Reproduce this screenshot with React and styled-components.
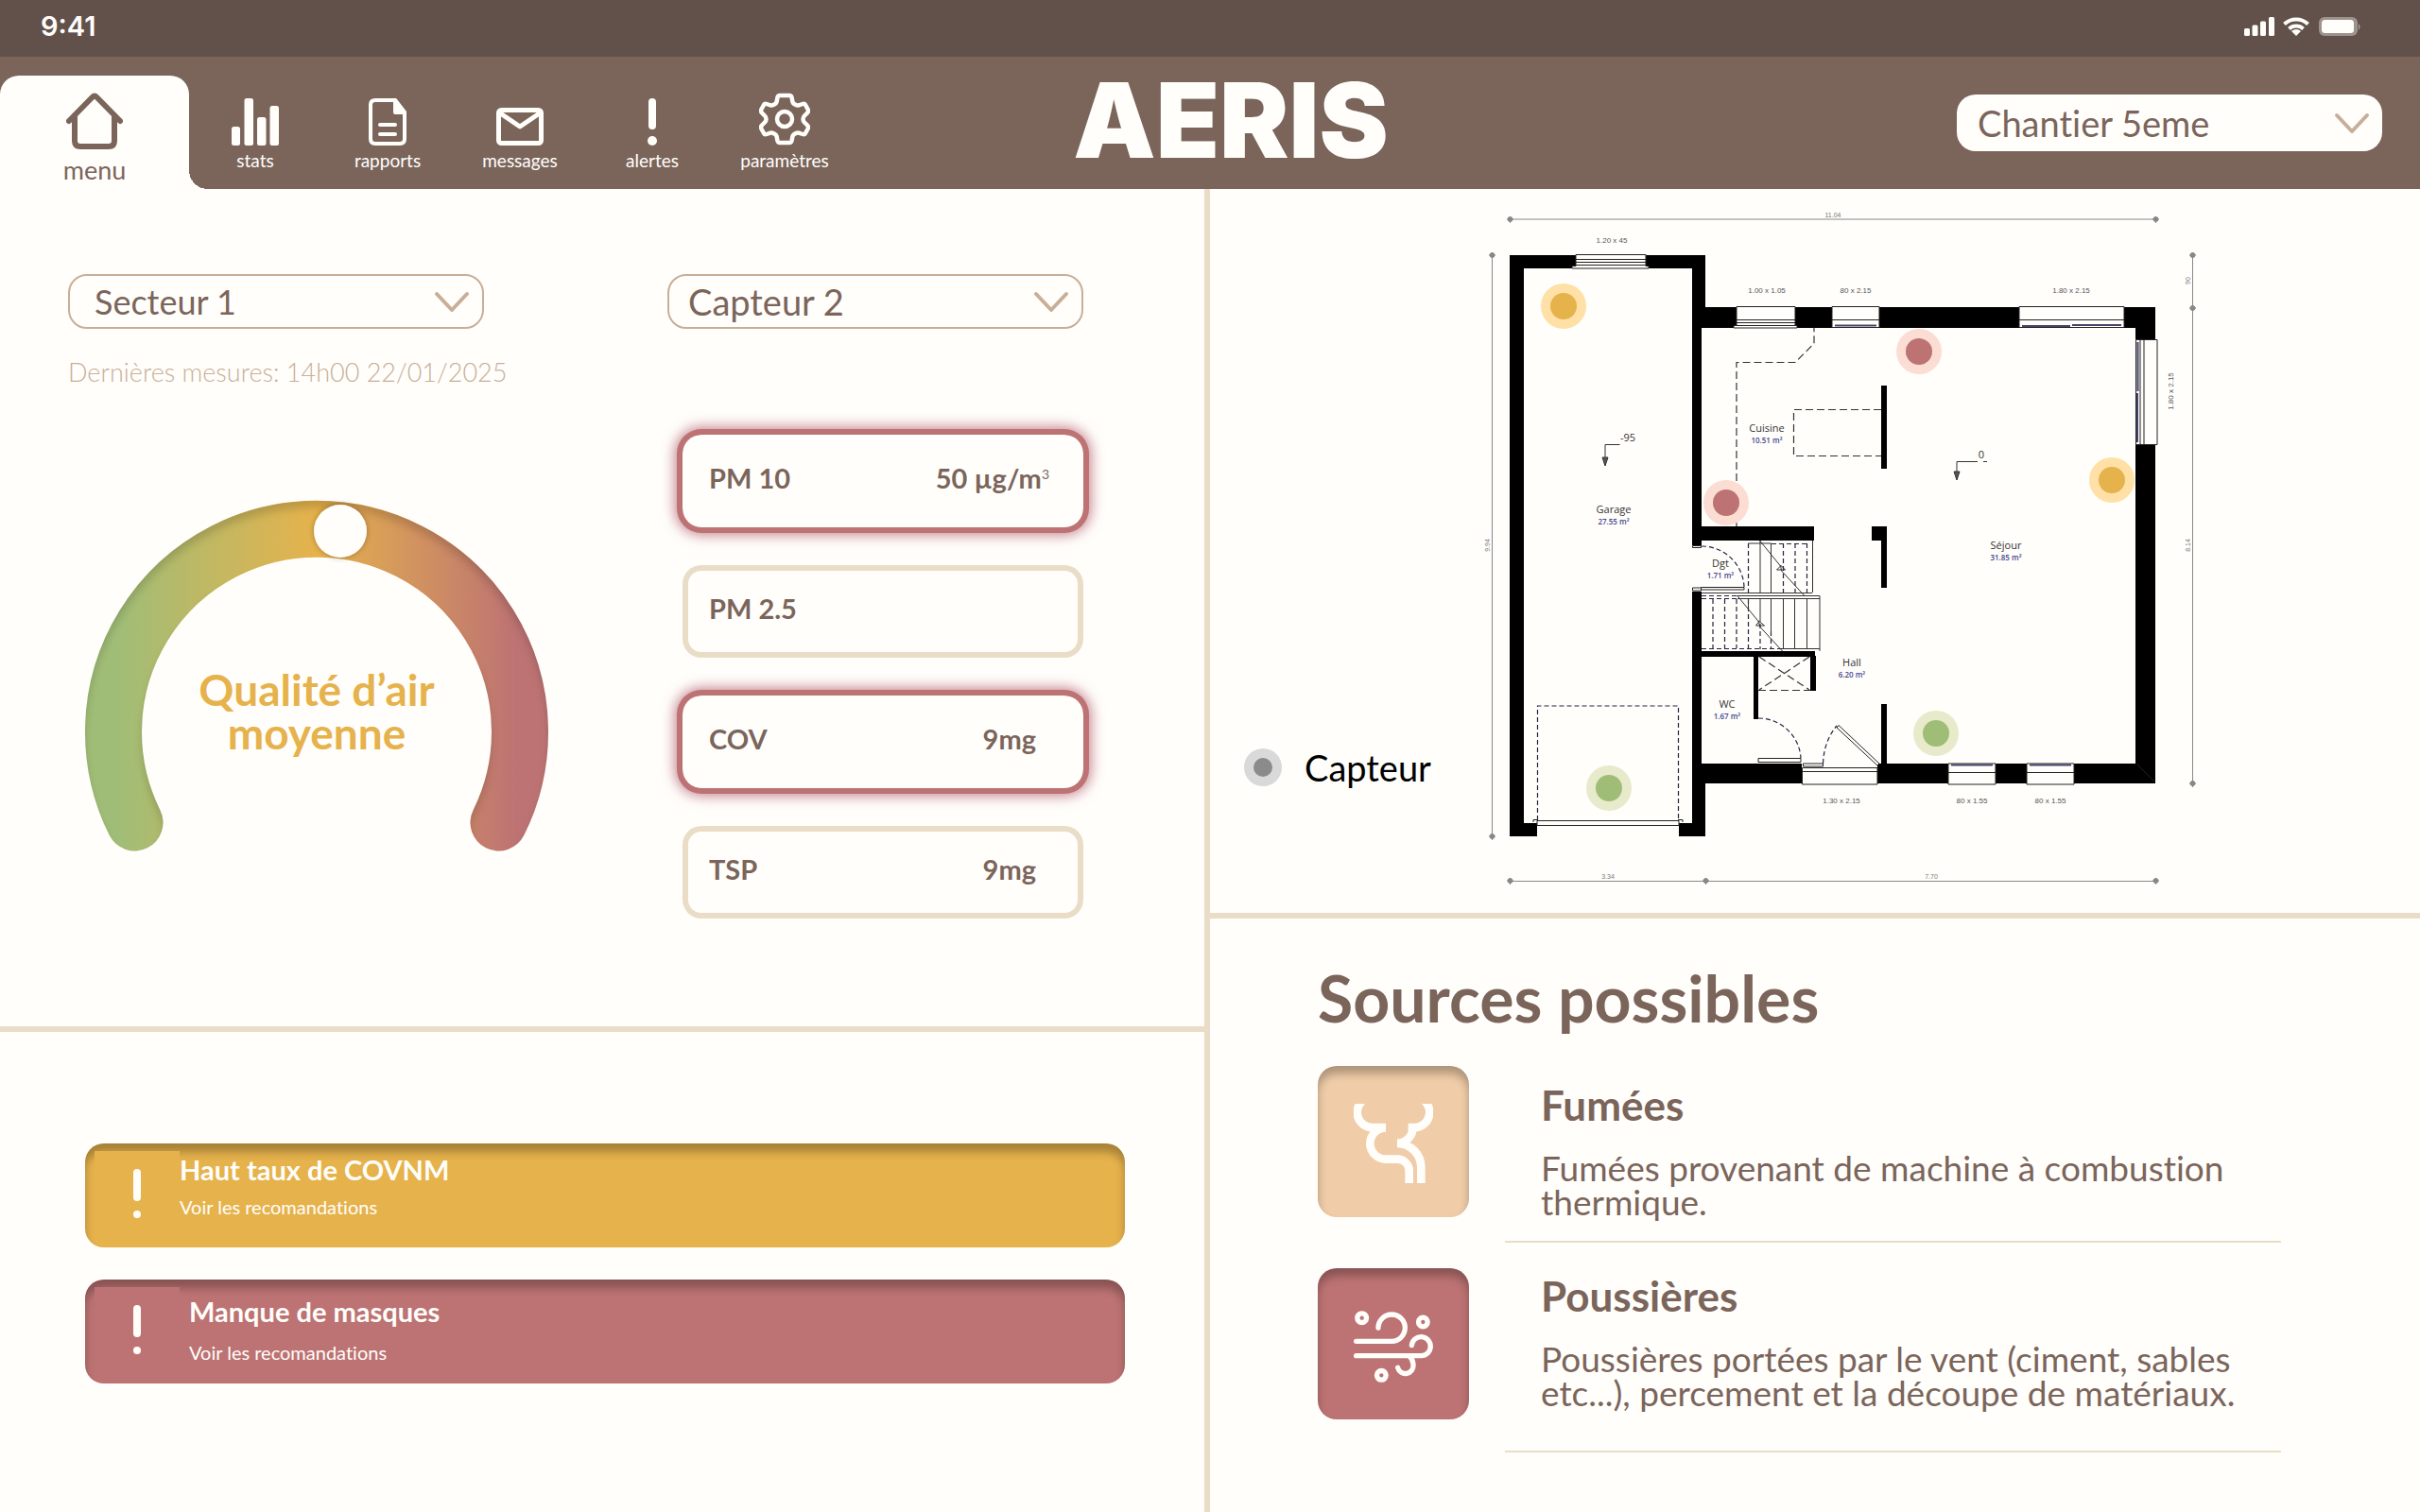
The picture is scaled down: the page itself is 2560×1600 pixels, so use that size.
import React from "react";
import styled, { createGlobalStyle } from "styled-components";

const c = {
  page: "#fffefb",
  dark: "#62514a",
  brown: "#7b655b",
  tan: "#c9ae97",
  sand: "#e9ddc7",
  yellow: "#e6b24c",
  red: "#bd7373",
  green: "#a0bd77",
  peach: "#f0cca8",
};

const GlobalStyle = createGlobalStyle`
  *, *::before, *::after { box-sizing: border-box; }
  body {
    margin: 0;
    background: ${c.page};
    color: ${c.brown};
    font-family: Lato, "Open Sans", sans-serif;
    font-variant-ligatures: none;
  }
  h1, h2, h3, p, ul { margin: 0; padding: 0; }
  ul { list-style: none; }
  button, select { font: inherit; color: inherit; border: 0; background: none; margin: 0; padding: 0; }
  svg { display: block; }
`;

const Page = styled.div`
  min-height: 100vh;
  display: flex;
  flex-direction: column;
`;

/* ---------- status bar ---------- */
const StatusBar = styled.div`
  height: 60px;
  padding: 0 62px 4px 43px;
  display: flex;
  align-items: center;
  justify-content: space-between;
  background: ${c.dark};
  color: ${c.page};
`;
const Clock = styled.time`
  font: 600 29px/32px Inter, sans-serif;
`;
const StatusIcons = styled.div`
  display: flex;
  align-items: center;
  gap: 8px;
`;

/* ---------- header ---------- */
const Header = styled.header`
  height: 140px;
  padding-right: 40px;
  display: grid;
  grid-template-columns: 1fr auto 1fr;
  align-items: center;
  background: ${c.brown};
`;
const Nav = styled.nav`
  align-self: stretch;
  display: flex;
  align-items: flex-end;
`;
const NavItem = styled.button`
  width: 140px;
  height: 120px;
  padding-bottom: 18px;
  display: flex;
  flex-direction: column;
  align-items: center;
  justify-content: flex-end;
  gap: 4px;
  color: ${c.page};
  font-size: 19px;
  line-height: 24px;
  cursor: pointer;
`;
const NavTab = styled(NavItem)`
  position: relative;
  width: 200px;
  padding-bottom: 4px;
  gap: 6px;
  border-radius: 20px 20px 0 0;
  background: ${c.page};
  color: ${c.brown};
  font-size: 27px;
  line-height: 32px;
  &::after {
    content: "";
    position: absolute;
    left: 100%;
    bottom: 0;
    width: 20px;
    height: 20px;
    background: radial-gradient(circle at 100% 0, transparent 20px, ${c.page} 20px);
  }
`;
const Logo = styled.h1`
  padding: 0 0 6px 84px;
  color: ${c.page};
  font-family: Inter, Lato, sans-serif;
  font-size: 110px;
  font-weight: 900;
  line-height: 120px;
`;

/* ---------- drop-downs ---------- */
const PickerBox = styled.label`
  display: grid;
  align-items: center;
  width: ${(p) => p.$width}px;
  height: ${(p) => p.$height}px;
  justify-self: end;
  border-radius: 20px;
  border: ${(p) => (p.$filled ? "0" : `2px solid ${c.tan}`)};
  background: ${c.page};
  color: ${c.brown};
  & > * { grid-area: 1 / 1; }
  & > svg { justify-self: end; margin: 2px 13px 0 0; pointer-events: none; }
`;
const Picker = styled.select`
  appearance: none;
  width: 100%;
  height: 100%;
  padding: 0 60px 0 ${(p) => p.$indent}px;
  font-size: ${(p) => p.$size}px;
  line-height: 44px;
`;

function Dropdown({ label, value, width, height, indent, filled, size = 38 }) {
  return (
    <PickerBox $width={width} $height={height} $filled={filled}>
      <Picker aria-label={label} defaultValue={value} $indent={indent} $size={size}>
        <option>{value}</option>
      </Picker>
      <svg width="38" height="24" viewBox="0 0 38 24" fill="none" stroke={c.tan} strokeWidth="4" strokeLinecap="round" strokeLinejoin="round">
        <path d="M3 3 19 20 35 3" />
      </svg>
    </PickerBox>
  );
}

/* ---------- layout ---------- */
const Main = styled.main`
  flex: 1;
  display: grid;
  grid-template-columns: 1fr 1fr;
`;
const Column = styled.div`
  display: flex;
  flex-direction: column;
  min-width: 0;
  border-right: ${(p) => (p.$divided ? `6px solid ${c.sand}` : "0")};
`;
const Measures = styled.section`
  display: flex;
  justify-content: space-between;
  padding: 90px 128px 114px 72px;
  border-bottom: 6px solid ${c.sand};
`;
const Sector = styled.div`
  display: flex;
  flex-direction: column;
`;
const Updated = styled.p`
  margin-top: 28px;
  color: ${c.tan};
  font-size: 27px;
  font-weight: 300;
  line-height: 36px;
`;
const Gauge = styled.div`
  display: grid;
  width: 490px;
  margin: 118px 0 0 18px;
  & > * { grid-area: 1 / 1; }
  & > svg { overflow: visible; }
`;
const Quality = styled.p`
  padding-top: 177px;
  text-align: center;
  color: ${c.yellow};
  font-size: 46px;
  font-weight: 700;
  line-height: 46px;
`;
const Sensor = styled.div`
  display: flex;
  flex-direction: column;
  align-items: flex-end;
  gap: 112px;
`;
const Readings = styled.ul`
  width: 424px;
  display: flex;
  flex-direction: column;
  gap: 40px;
`;
const Reading = styled.li`
  height: 98px;
  padding: 0 ${(p) => p.$inset}px 6px 28px;
  display: flex;
  align-items: center;
  justify-content: space-between;
  border-radius: 20px;
  box-shadow: ${(p) =>
    p.$alert
      ? `0 0 0 6px ${c.red}, 0 0 14px 8px rgba(176, 88, 104, 0.75)`
      : `inset 0 0 0 6px ${c.sand}`};
  font-size: 29px;
  line-height: 36px;
  font-weight: 700;
  sup { font-size: 14px; line-height: 0; font-weight: 400; vertical-align: 10px; }
`;

/* ---------- alerts ---------- */
const Alerts = styled.section`
  display: flex;
  flex-direction: column;
  gap: 34px;
  padding: 118px 84px 0 90px;
`;
const Alert = styled.article`
  height: 110px;
  display: flex;
  border-radius: 20px;
  background: ${(p) => p.$color};
  box-shadow: inset 0 9px 10px rgba(0, 0, 0, 0.28);
  color: ${c.page};
`;
const AlertIcon = styled.div`
  width: 90px;
  margin: 8px 0 8px 10px;
  padding: 19px 0 0 41px;
  background: ${(p) => p.$color};
`;
const AlertText = styled.div`
  display: flex;
  flex-direction: column;
  gap: ${(p) => (p.$wide ? 15 : 11)}px;
  padding: ${(p) => (p.$wide ? "18px 0 0 10px" : "12px 0 0")};
`;
const AlertTitle = styled.h3`
  font-size: 29px;
  line-height: 32px;
`;
const AlertLink = styled.a`
  color: inherit;
  text-decoration: none;
  font-size: 20px;
  line-height: 24px;
`;

/* ---------- floor plan ---------- */
const PlanSection = styled.section`
  display: flex;
  padding: 6px 0 0 36px;
  border-bottom: 6px solid ${c.sand};
`;
const Legend = styled.div`
  flex: none;
  width: 244px;
  align-self: flex-end;
  display: flex;
  align-items: center;
  gap: 24px;
  margin-bottom: 132px;
  color: #000;
  font-size: 38px;
  line-height: 44px;
`;
const PlanDrawing = styled.svg`
  flex: 0 1 780px;
  min-width: 0;
  .room { font: 11px "Open Sans", sans-serif; fill: #333; text-anchor: middle; }
  .area { font: 600 8px "Open Sans", sans-serif; fill: #45458c; text-anchor: middle; }
  .size { font: 8px "Liberation Sans", sans-serif; fill: #555; text-anchor: middle; }
  .dim { font: 7px "Liberation Sans", sans-serif; fill: #777; text-anchor: middle; }
`;

/* ---------- sources ---------- */
const Sources = styled.section`
  padding: 46px 147px 0 114px;
`;
const SourcesTitle = styled.h2`
  font-size: 68px;
  line-height: 76px;
  font-weight: 700;
`;
const SourceList = styled.ul`
  margin-top: 34px;
  display: flex;
  flex-direction: column;
  gap: 27px;
`;
const Source = styled.li`
  display: flex;
  align-items: flex-start;
  gap: 38px;
`;
const Tile = styled.div`
  flex: none;
  width: 160px;
  height: 160px;
  padding: 40px 38px;
  border-radius: 20px;
  background: ${(p) => p.$color};
  box-shadow: inset 0 8px 10px rgba(0, 0, 0, 0.28);
`;
const SourceText = styled.div`
  flex: 1;
  padding: ${(p) => (p.$low ? "15px 0 23px 38px" : "3px 0 43px 38px")};
  border-bottom: 2px solid ${c.sand};
`;
const SourceName = styled.h3`
  font-size: 44px;
  line-height: 52px;
  font-weight: 700;
`;
const SourceInfo = styled.p`
  margin-top: 23px;
  font-size: 37px;
  line-height: 36px;
`;

/* ---------- icons ---------- */
const HomeIcon = () => (
  <svg width="60" height="60" viewBox="0 0 60 60" fill="none" stroke="currentColor" strokeWidth="6" strokeLinecap="round" strokeLinejoin="round">
    <path d="M3 30 27.500 5q2.500-2.500 5 0L57 30M9 26v25q0 6 6 6h30q6 0 6-6V26" />
  </svg>
);
const StatsIcon = () => (
  <svg width="50" height="50" viewBox="0 0 50 50" fill="currentColor">
    <rect y="30" width="9" height="20" rx="2.500" />
    <rect x="13.500" width="9.500" height="50" rx="2.500" />
    <rect x="27" y="20" width="9.500" height="30" rx="2.500" />
    <rect x="40.500" y="8" width="9.500" height="42" rx="2.500" />
  </svg>
);
const ReportIcon = () => (
  <svg width="40" height="50" viewBox="0 0 40 50" fill="none" stroke="currentColor" strokeWidth="4" strokeLinecap="round" strokeLinejoin="round">
    <path d="M7 2h21l10 13v28q0 5-5 5H7q-5 0-5-5V7q0-5 5-5z" />
    <path d="M28 2v13h10z" fill="currentColor" />
    <path d="M12 28h16M12 38h16" />
  </svg>
);
const MailIcon = () => (
  <svg width="50" height="40" viewBox="0 0 50 40" fill="none" stroke="currentColor" strokeWidth="5" strokeLinejoin="round">
    <rect x="2.500" y="2.500" width="45" height="35" rx="3" />
    <path d="M3 5 25 20 47 5" />
  </svg>
);
const AlertNavIcon = () => (
  <svg width="12" height="50" viewBox="0 0 12 50" fill="currentColor">
    <rect x="2" width="8" height="33" rx="4" />
    <circle cx="6" cy="45" r="5" />
  </svg>
);
const GearIcon = () => (
  <svg width="54" height="56" viewBox="0 0 54 56" fill="none" stroke="currentColor" strokeWidth="4.500" strokeLinejoin="round">
    <path d="M22 3h10q2 0 2.500 2l1 5q.5 1.500 2 2.300l1.500.8q1.500.8 3 .3l4-1.400q2-.7 3 1l2.500 4.500q1.200 2.300-.5 4l-3 3q-1.500 1.500-1.500 3.500t1.500 3.500l3 3q1.700 1.700.5 4L49 43q-1 1.700-3 1l-4-1.400q-1.500-.5-3 .3l-1.500.8q-1.500.8-2 2.300l-1 5q-.5 2-2.500 2H22q-2 0-2.500-2l-1-5q-.5-1.500-2-2.300l-1.500-.8q-1.500-.8-3-.3L8 44q-2 .7-3-1l-2.500-4.500q-1.200-2.300.5-4l3-3Q7.500 30 7.500 28T6 24.500l-3-3q-1.700-1.700-.5-4L5 13q1-1.700 3-1l4 1.400q1.500.5 3-.3l1.500-.8q1.500-.8 2-2.300l1-5q.5-2 2.500-2z" />
    <circle cx="27" cy="28" r="8" />
  </svg>
);
const BangIcon = () => (
  <svg width="8" height="52" viewBox="0 0 8 52" fill="currentColor">
    <rect width="8" height="34" rx="4" />
    <circle cx="4" cy="48" r="4" />
  </svg>
);
const SmokeIcon = () => (
  <svg width="84" height="84" viewBox="0 0 252 252" fill="none" stroke={c.page} strokeWidth="26">
    <path d="M36-15A48 48 0 0 0 61 75H102" />
    <path d="M102 76a50 50 0 0 0 0 100h37a37 37 0 0 1 37 37v39" />
    <path d="M216-15A48 48 0 0 1 191 75h-18" />
    <path d="M188 75a50 50 0 0 1-50 50" />
    <path d="M138 126a76 76 0 0 1 76 76v50" />
  </svg>
);
const WindIcon = () => (
  <svg width="84" height="84" viewBox="0 0 252 252" fill="none" stroke={c.page} strokeWidth="16" strokeLinecap="round">
    <circle cx="26" cy="38" r="14.500" />
    <circle cx="220" cy="51" r="14.500" />
    <circle cx="88" cy="220" r="14.500" />
    <path d="M8 112h113a42.500 42.500 0 1 0-43-43" />
    <path d="M8 158h206a30 30 0 1 0-30-33" />
    <path d="M178 160q11 11 11 27a25 25 0 0 1-49 9" />
  </svg>
);

const GaugeDrawing = () => (
  <svg width="490" height="371" viewBox="90 530 490 371" role="img" aria-label="Qualité d’air moyenne">
    <defs>
      <linearGradient id="scale" gradientUnits="userSpaceOnUse" x1="90" y1="0" x2="580" y2="0">
        <stop offset="0.070" stopColor={c.green} />
        <stop offset="0.500" stopColor={c.yellow} />
        <stop offset="0.930" stopColor={c.red} />
      </linearGradient>
      <filter id="inner" filterUnits="userSpaceOnUse" x="70" y="510" width="530" height="410">
        <feComponentTransfer in="SourceAlpha" result="inverse">
          <feFuncA type="table" tableValues="1 0" />
        </feComponentTransfer>
        <feOffset in="inverse" dy="8" result="moved" />
        <feGaussianBlur in="moved" stdDeviation="4" result="soft" />
        <feComponentTransfer in="soft" result="faded">
          <feFuncA type="linear" slope="0.300" />
        </feComponentTransfer>
        <feComposite in="faded" in2="SourceAlpha" operator="in" result="shade" />
        <feMerge>
          <feMergeNode in="SourceGraphic" />
          <feMergeNode in="shade" />
        </feMerge>
      </filter>
      <filter id="drop" x="-50%" y="-50%" width="200%" height="200%">
        <feDropShadow dx="0" dy="0" stdDeviation="3" floodColor="#000" floodOpacity="0.300" />
      </filter>
    </defs>
    <g filter="url(#inner)">
      <path d="M142.500 870.500A215 215 0 1 1 527.500 870.500" fill="none" stroke="url(#scale)" strokeWidth="60" strokeLinecap="round" />
    </g>
    <circle cx="360" cy="562" r="28" fill={c.page} filter="url(#drop)" />
  </svg>
);

/* ---------- plan data ---------- */
const walls = [
  [1597, 270, 15, 615], [1597, 270, 70, 14], [1741, 270, 63, 14], [1790, 270, 14, 56],
  [1790, 325, 10, 252], [1790, 626, 10, 200], [1790, 808, 14, 77], [1597, 871, 29, 14],
  [1776, 871, 28, 14], [1799, 325, 38, 22], [1899, 325, 39, 22], [1988, 325, 148, 22],
  [2247, 325, 33, 22], [2259, 325, 21, 34], [2259, 470, 21, 359], [1799, 808, 107, 21],
  [1986, 808, 75, 21], [2111, 808, 33, 21], [2194, 808, 86, 21], [1799, 557, 120, 15],
  [1990, 408, 6, 88], [1980, 557, 16, 15], [1990, 557, 6, 65], [1990, 745, 6, 65],
  [1799, 689, 121, 6], [1855, 689, 5, 72], [1915, 694, 6, 37],
];
const rooms = [
  ["Cuisine", "10.51 m²", 1869, 457], ["Garage", "27.55 m²", 1707, 543], ["Séjour", "31.85 m²", 2122, 581],
  ["Dgt", "1.71 m²", 1820, 600], ["Hall", "6.20 m²", 1959, 705], ["WC", "1.67 m²", 1827, 749],
];
const sizes = [
  ["1.20 x 45", 1705, 257], ["1.00 x 1.05", 1869, 310], ["80 x 2.15", 1963, 310], ["1.80 x 2.15", 2191, 310],
  ["1.30 x 2.15", 1948, 850], ["80 x 1.55", 2086, 850], ["80 x 1.55", 2169, 850],
];
const marks = [
  [1597, 232], [2280, 232], [1578, 270], [1578, 885], [2319, 270], [2319, 326], [2319, 829],
  [1597, 932], [1804, 932], [2280, 932],
];
const sensors = [
  [1654, 324, "yellow"], [1826, 532, "red"], [2030, 372, "red"], [2234, 508, "yellow"],
  [1702, 834, "green"], [2048, 776, "green"],
];
const halo = { yellow: "#ffe0a6", red: "#fbddd3", green: "#e7eacb" };

const FloorPlan = () => (
  <PlanDrawing viewBox="1560 206 780 760" role="img" aria-label="Plan du chantier">
    <g stroke="#888" strokeWidth="1" fill="none">
      <path d="M1597 232H2280M1578.500 270V885M2319.500 270V829M1597 932.500H2280" />
      {marks.map(([x, y]) => (
        <g key={`${x}-${y}`}>
          <circle cx={x + 0.5} cy={y} r="2.500" fill="#888" />
          <path d={`M${x - 3} ${y}h7M${x + 0.5} ${y - 3}v7`} />
        </g>
      ))}
    </g>
    {walls.map(([x, y, w, h], i) => (
      <rect key={i} x={x} y={y} width={w} height={h} fill="#000" />
    ))}
    <path d="M2260 808 2279 827" stroke="#222" />
    <g fill={c.page} stroke="#222" strokeWidth="1">
      <path d="M1667 269.500h74v12h3v2.500h-81v-2.500h4zM1667 274.500h74M1667 277.500h74M1667 280.500h74" />
      <path d="M1837 324.500h62v20h2v2.500h-67v-2.500h3zM1837 338.500h62M1837 341.500h62M1837 344.500h62" />
      <path d="M1938 324.500h50v22h-50zM1938 338.500h50M2136 324.500h111v22h-111zM2136 338.500h111" />
      <path d="M2259.500 359.500h22.500v111h-22.500zM2268 359v111M2264 359v111" />
      <path d="M1906.500 812.500h79.500v17.500h-79.500zM1906 816.500h80M1907.500 808h21v3h-21z" />
      <path d="M2061 808h50v22h-50zM2061 817.500h50M2144 808h50v22h-50zM2144 817.500h50" />
      <path d="M1626 868.500h150v5h-150zM1622 870v-2.500h5M1780 870v-2.500h-5" />
      <path d="M1799.500 621.500h45.500v2.500h-45.500zM1860 802.500h45v4h-45zM1790.500 577.500h9v2h-9zM1790.500 622h9v3h-9z" />
      <path d="M1945 767.500 1988 808l-2 2-43-40z" />
    </g>
    <g stroke="#44446a" strokeWidth="2">
      <path d="M1941 344.500h44M2139 345h51M2192 344h52M2261.500 362v52M2261 416v52M2064 809.500h44M2147 809.500h44" />
    </g>
    <g fill="none" stroke="#333" strokeWidth="1.200" strokeDasharray="8 4">
      <path d="M1837 557V383.500h62l20-20V347M1990 433.500h-92.500v49H1990" />
      <path d="M1860 730.500h55M1861 695l53 35M1914 695l-53 35" />
    </g>
    <g fill="none" stroke="#222240" strokeWidth="1.200" strokeDasharray="5 3">
      <path d="M1626.500 868V747h149v121" />
      <path d="M1800 578a45 45 0 0 1 45 43M1860 760a45 45 0 0 1 45 42M1928.500 808q1-24 14.500-40" />
      <path d="M1849.500 575v52M1874 575.500h38M1886.500 575v52M1899 575v52M1911.500 575v52" />
      <path d="M1800 630.500h38M1800 633.500h38M1812 634v52M1824.500 634v52M1837 634v52M1849.500 634v52M1862 660v27M1873.500 668v18M1800 686.500h85" />
    </g>
    <g fill="none" stroke="#333" strokeWidth="1">
      <path d="M1849.500 575h24M1862 572v55M1873.500 575v52M1917.500 572v55M1800 627.500h117" />
      <path d="M1838 630.500h87v58.500M1838 633.500h87M1885 686.500h40M1849.500 634v12M1862 634v24M1873.500 634v36M1886.500 634v52M1898.500 634v52M1911.500 634v52" />
      <path d="M1861.500 572l22 27-4 4h9l-5-5 1 6 24 26M1837.500 630l23 28-3 4h9l-6-5 1 6 24 26" />
      <path d="M1713.500 470.500H1698V492M2092 488.500h-22V506M2098 488.500h4" />
      <path d="M1695 484l3 9 3-9zM2067 499l3 9 3-9z" fill="#555" />
    </g>
    {rooms.map(([name, area, x, y]) => (
      <g key={name}>
        <text className="room" x={x} y={y}>{name}</text>
        <text className="area" x={x} y={y + 12}>{area}</text>
      </g>
    ))}
    <text className="room" x="1722" y="467">-95</text>
    <text className="room" x="2096" y="485">0</text>
    {sizes.map(([label, x, y]) => (
      <text key={x} className="size" x={x} y={y}>{label}</text>
    ))}
    <text className="size" transform="translate(2299 414) rotate(-90)">1.80 x 2.15</text>
    <text className="dim" x="1939" y="230">11.04</text>
    <text className="dim" x="1701" y="930">3.34</text>
    <text className="dim" x="2043" y="930">7.70</text>
    <text className="dim" transform="translate(1576 577) rotate(-90)">9.94</text>
    <text className="dim" transform="translate(2317 577) rotate(-90)">8.14</text>
    <text className="dim" transform="translate(2317 297) rotate(-90)">90</text>
    {sensors.map(([x, y, tone]) => (
      <g key={`${x}-${y}`}>
        <circle cx={x} cy={y} r="24" fill={halo[tone]} />
        <circle cx={x} cy={y} r="14" fill={c[tone]} />
      </g>
    ))}
  </PlanDrawing>
);

const navItems = [
  ["stats", StatsIcon], ["rapports", ReportIcon], ["messages", MailIcon],
  ["alertes", AlertNavIcon], ["paramètres", GearIcon],
];

export default function App() {
  return (
    <Page>
      <GlobalStyle />
      <StatusBar>
        <Clock>9:41</Clock>
        <StatusIcons>
          <svg width="32" height="20" viewBox="0 0 32 20" fill={c.page}>
            <rect y="12" width="6" height="8" rx="1.500" />
            <rect x="8.500" y="8.500" width="6" height="11.500" rx="1.500" />
            <rect x="17" y="4.500" width="6" height="15.500" rx="1.500" />
            <rect x="26" width="6" height="20" rx="1.500" />
          </svg>
          <svg width="30" height="20" viewBox="0 0 30 20" fill="none" stroke={c.page} strokeWidth="4">
            <path d="M2.500 7.500a18 18 0 0 1 25 0M7.500 12.500a11 11 0 0 1 15 0" />
            <path d="M15 20l-5-5a7 7 0 0 1 10 0z" fill={c.page} stroke="none" />
          </svg>
          <svg width="46" height="22" viewBox="0 0 46 22" fill={c.page}>
            <rect x="1" y="1" width="41" height="20" rx="6" opacity="0.380" />
            <rect x="4" y="4" width="34" height="14" rx="3.500" />
            <path d="M43 8q3 3 0 7z" opacity="0.450" />
          </svg>
        </StatusIcons>
      </StatusBar>

      <Header>
        <Nav>
          <NavTab type="button" aria-current="page">
            <HomeIcon />
            menu
          </NavTab>
          {navItems.map(([label, Icon]) => (
            <NavItem key={label} type="button">
              <Icon />
              {label}
            </NavItem>
          ))}
        </Nav>
        <Logo>AERIS</Logo>
        <Dropdown label="Chantier" value="Chantier 5eme" width={450} height={60} indent={22} filled />
      </Header>

      <Main>
        <Column $divided>
          <Measures>
            <Sector>
              <Dropdown label="Secteur" value="Secteur 1" width={440} height={58} indent={26} size={36} />
              <Updated>Dernières mesures: 14h00 22/01/2025</Updated>
              <Gauge>
                <GaugeDrawing />
                <Quality>
                  Qualité d’air
                  <br />
                  moyenne
                </Quality>
              </Gauge>
            </Sector>
            <Sensor>
              <Dropdown label="Capteur" value="Capteur 2" width={440} height={58} indent={20} />
              <Readings>
                <Reading $alert $inset={36}>
                  <span>PM 10</span>
                  <span>50 µg/m<sup>3</sup></span>
                </Reading>
                <Reading $inset={50}>
                  <span>PM 2.5</span>
                </Reading>
                <Reading $alert $inset={50}>
                  <span>COV</span>
                  <span>9mg</span>
                </Reading>
                <Reading $inset={50}>
                  <span>TSP</span>
                  <span>9mg</span>
                </Reading>
              </Readings>
            </Sensor>
          </Measures>
          <Alerts>
            <Alert $color={c.yellow}>
              <AlertIcon $color={c.yellow}><BangIcon /></AlertIcon>
              <AlertText>
                <AlertTitle>Haut taux de COVNM</AlertTitle>
                <AlertLink href="#covnm">Voir les recomandations</AlertLink>
              </AlertText>
            </Alert>
            <Alert $color={c.red}>
              <AlertIcon $color={c.red}><BangIcon /></AlertIcon>
              <AlertText $wide>
                <AlertTitle>Manque de masques</AlertTitle>
                <AlertLink href="#masques">Voir les recomandations</AlertLink>
              </AlertText>
            </Alert>
          </Alerts>
        </Column>

        <Column>
          <PlanSection>
            <Legend>
              <svg width="40" height="40" viewBox="0 0 40 40">
                <circle cx="20" cy="20" r="20" fill="#d9d9d9" />
                <circle cx="20" cy="20" r="10" fill="#8b8b8b" />
              </svg>
              Capteur
            </Legend>
            <FloorPlan />
          </PlanSection>
          <Sources>
            <SourcesTitle>Sources possibles</SourcesTitle>
            <SourceList>
              <Source>
                <Tile $color={c.peach}><SmokeIcon /></Tile>
                <SourceText $low>
                  <SourceName>Fumées</SourceName>
                  <SourceInfo>Fumées provenant de machine à combustion thermique.</SourceInfo>
                </SourceText>
              </Source>
              <Source>
                <Tile $color={c.red}><WindIcon /></Tile>
                <SourceText>
                  <SourceName>Poussières</SourceName>
                  <SourceInfo>Poussières portées par le vent (ciment, sables etc...), percement et la découpe de matériaux.</SourceInfo>
                </SourceText>
              </Source>
            </SourceList>
          </Sources>
        </Column>
      </Main>
    </Page>
  );
}
